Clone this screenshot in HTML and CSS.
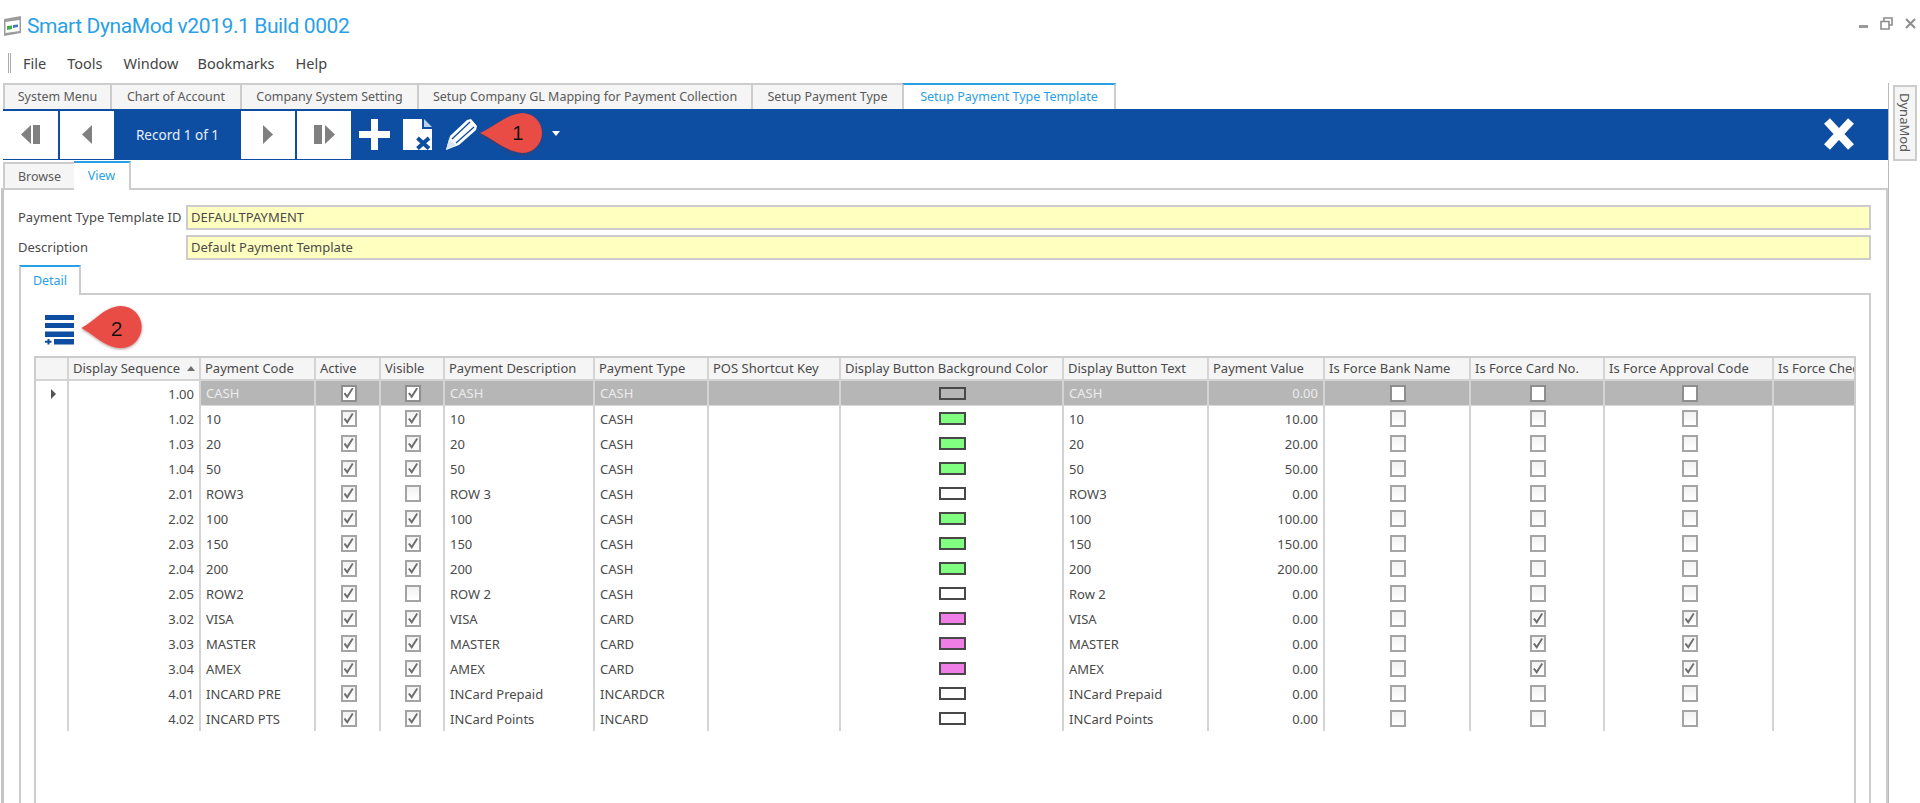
FILE: index.html
```html
<!DOCTYPE html>
<html lang="en">
<head>
<meta charset="utf-8">
<title>Smart DynaMod</title>
<link rel="stylesheet" href="styles.css">
</head>
<body>
<div class="app">
  <header class="titlebar">
    <svg class="logo" viewBox="0 0 19 20"><path d="M1 3 18 0V17L1 20Z" fill="#9c9c9c"/><path d="M2.500 6 16.500 4V15L2.500 17Z" fill="#fff"/><path d="M4 10 9 9.500V13L4 14Z" fill="#3fae49"/><path d="M10 9 15 8.500V11L10 12Z" fill="#4a78b8"/></svg>
    <h1 class="app-title">Smart DynaMod v2019.1 Build 0002</h1>
    <div class="winctl">
      <svg class="wc-min" viewBox="0 0 9 3"><rect width="9" height="3" fill="#9a9a9a"/></svg>
      <svg class="wc-res" viewBox="0 0 13 13"><path d="M4 4V1H12V8H9M1 4.500H9V12H1Z" fill="none" stroke="#8c8c8c" stroke-width="1.600"/></svg>
      <svg class="wc-close" viewBox="0 0 11 11"><path d="M1 1 10 10M10 1 1 10" stroke="#8c8c8c" stroke-width="2"/></svg>
    </div>
  </header>
  <nav class="menubar">
    <span class="grip"></span>
    <span class="mi mi-file">File</span><span class="mi mi-tools">Tools</span><span class="mi mi-window">Window</span><span class="mi mi-book">Bookmarks</span><span class="mi">Help</span>
  </nav>
  <div class="stage">
    <main class="workspace">
      <div class="doc-tabs">
        <span class="dtab t1">System Menu</span><span class="dtab t2">Chart of Account</span><span class="dtab t3">Company System Setting</span><span class="dtab t4">Setup Company GL Mapping for Payment Collection</span><span class="dtab t5">Setup Payment Type</span><span class="dtab t6 active">Setup Payment Type Template</span>
      </div>
      <div class="toolbar">
        <button class="navbtn b1"><svg viewBox="0 0 19 19" class="navico"><path d="M10 0V19L0 9.500Z M12 0H19V19H12Z" fill="#808080"/></svg></button>
        <button class="navbtn b2"><svg viewBox="0 0 10 19" class="navico-s"><path d="M10 0V19L0 9.500Z" fill="#808080"/></svg></button>
        <span class="record">Record 1 of 1</span>
        <button class="navbtn b3"><svg viewBox="0 0 10 19" class="navico-s"><path d="M0 0V19L10 9.500Z" fill="#808080"/></svg></button>
        <button class="navbtn b4"><svg viewBox="0 0 21 19" class="navico-r"><path d="M0 0H8V19H0Z M11 0V19L21 9.500Z" fill="#808080"/></svg></button>
        <svg class="ti ti-plus" viewBox="0 0 31 31"><path d="M12 0H19V12H31V19H19V31H12V19H0V12H12Z" fill="#fff"/></svg>
        <svg class="ti ti-doc" viewBox="0 0 29 31"><path d="M0 0H19V10H29V31H0Z" fill="#fff"/><path d="M21 0 29 8H21Z" fill="#bcd0ea"/><path d="M14.500 19 26 29.500M26 19 14.500 29.500" stroke="#0e4ea2" stroke-width="4"/></svg>
        <svg class="ti ti-pen" viewBox="0 0 32 31"><path d="M0 31 4 17 21 1 25 0 31 7 30 11 13 26Z" fill="#fff"/><path d="M6 20 24 3M10 24 28 8" stroke="#0e4ea2" stroke-width="1.300"/><path d="M0 31 3 20 10 26Z" fill="#dbe6f4"/></svg>
        <span class="caret"></span>
        <svg class="ti ti-close" viewBox="0 0 30 32"><path d="M3 3 27 29M27 3 3 29" stroke="#fff" stroke-width="8"/></svg>
        <svg class="callout co1" viewBox="-1 -1 65 44"><path d="M0 20C15 13 25 2 42 0A20 20 0 1 1 42 40C25 38 15 27 0 20Z" fill="#e94b45"/><text x="38" y="27" class="co-num co-num1">1</text></svg>
      </div>
      <section class="pane">
        <div class="view-tabs"><span class="vtab">Browse</span><span class="vtab active">View</span></div>
        <div class="view-body">
          <div class="field"><label class="flabel">Payment Type Template ID</label><div class="finput">DEFAULTPAYMENT</div></div>
          <div class="field"><label class="flabel">Description</label><div class="finput">Default Payment Template</div></div>
          <div class="detail-tabs"><span class="detail-tab">Detail</span></div>
          <div class="detail-panel">
            <div class="grid-tools">
              <svg class="rows-ico" viewBox="0 0 29 30"><path d="M0 0H29V5H0ZM0 8H29V13H0ZM0 16.500H29V22H0ZM9 24H29V29.500H9ZM2.500 24H4.500V25.700H6.500V27.700H4.500V29.500H2.500V27.700H0V25.700H2.500Z" fill="#0e4ea2"/></svg>
              <svg class="rows-ico2" viewBox="0 0 29 29"><path d="M0 0H29V6H0ZM0 22H29V29H0Z" fill="#0e4ea2"/></svg>
              <svg class="callout co2" viewBox="-1 -1 66 46"><path d="M0 23C15 15 24 1 41 0A22 22 0 1 1 41 44C24 43 15 31 0 23Z" fill="#e94b45"/><text x="37" y="31" class="co-num co-num2">2</text></svg>
            </div>
            <div class="grid-wrap">
              <table class="grid">
                <colgroup><col class="c0"><col class="c1"><col class="c2"><col class="c3"><col class="c4"><col class="c5"><col class="c6"><col class="c7"><col class="c8"><col class="c9"><col class="c10"><col class="c11"><col class="c12"><col class="c13"><col class="c14"></colgroup>
                <thead><tr><th></th><th>Display Sequence <span class="sort"></span></th><th>Payment Code</th><th>Active</th><th>Visible</th><th>Payment Description</th><th>Payment Type</th><th>POS Shortcut Key</th><th>Display Button Background Color</th><th>Display Button Text</th><th>Payment Value</th><th>Is Force Bank Name</th><th>Is Force Card No.</th><th>Is Force Approval Code</th><th>Is Force Cheque No.</th></tr></thead>
                <tbody>
                  <tr class="sel"><td class="ind"><span class="arrow"></span></td><td class="num seq">1.00</td><td>CASH</td><td class="ctr"><span class="cb on"></span></td><td class="ctr"><span class="cb on"></span></td><td>CASH</td><td>CASH</td><td></td><td class="ctr"><span class="sw grey"></span></td><td>CASH</td><td class="num">0.00</td><td class="ctr"><span class="cb"></span></td><td class="ctr"><span class="cb"></span></td><td class="ctr"><span class="cb"></span></td><td></td></tr>
                  <tr><td class="ind"></td><td class="num seq">1.02</td><td>10</td><td class="ctr"><span class="cb on"></span></td><td class="ctr"><span class="cb on"></span></td><td>10</td><td>CASH</td><td></td><td class="ctr"><span class="sw green"></span></td><td>10</td><td class="num">10.00</td><td class="ctr"><span class="cb"></span></td><td class="ctr"><span class="cb"></span></td><td class="ctr"><span class="cb"></span></td><td></td></tr>
                  <tr><td class="ind"></td><td class="num seq">1.03</td><td>20</td><td class="ctr"><span class="cb on"></span></td><td class="ctr"><span class="cb on"></span></td><td>20</td><td>CASH</td><td></td><td class="ctr"><span class="sw green"></span></td><td>20</td><td class="num">20.00</td><td class="ctr"><span class="cb"></span></td><td class="ctr"><span class="cb"></span></td><td class="ctr"><span class="cb"></span></td><td></td></tr>
                  <tr><td class="ind"></td><td class="num seq">1.04</td><td>50</td><td class="ctr"><span class="cb on"></span></td><td class="ctr"><span class="cb on"></span></td><td>50</td><td>CASH</td><td></td><td class="ctr"><span class="sw green"></span></td><td>50</td><td class="num">50.00</td><td class="ctr"><span class="cb"></span></td><td class="ctr"><span class="cb"></span></td><td class="ctr"><span class="cb"></span></td><td></td></tr>
                  <tr><td class="ind"></td><td class="num seq">2.01</td><td>ROW3</td><td class="ctr"><span class="cb on"></span></td><td class="ctr"><span class="cb"></span></td><td>ROW 3</td><td>CASH</td><td></td><td class="ctr"><span class="sw white"></span></td><td>ROW3</td><td class="num">0.00</td><td class="ctr"><span class="cb"></span></td><td class="ctr"><span class="cb"></span></td><td class="ctr"><span class="cb"></span></td><td></td></tr>
                  <tr><td class="ind"></td><td class="num seq">2.02</td><td>100</td><td class="ctr"><span class="cb on"></span></td><td class="ctr"><span class="cb on"></span></td><td>100</td><td>CASH</td><td></td><td class="ctr"><span class="sw green"></span></td><td>100</td><td class="num">100.00</td><td class="ctr"><span class="cb"></span></td><td class="ctr"><span class="cb"></span></td><td class="ctr"><span class="cb"></span></td><td></td></tr>
                  <tr><td class="ind"></td><td class="num seq">2.03</td><td>150</td><td class="ctr"><span class="cb on"></span></td><td class="ctr"><span class="cb on"></span></td><td>150</td><td>CASH</td><td></td><td class="ctr"><span class="sw green"></span></td><td>150</td><td class="num">150.00</td><td class="ctr"><span class="cb"></span></td><td class="ctr"><span class="cb"></span></td><td class="ctr"><span class="cb"></span></td><td></td></tr>
                  <tr><td class="ind"></td><td class="num seq">2.04</td><td>200</td><td class="ctr"><span class="cb on"></span></td><td class="ctr"><span class="cb on"></span></td><td>200</td><td>CASH</td><td></td><td class="ctr"><span class="sw green"></span></td><td>200</td><td class="num">200.00</td><td class="ctr"><span class="cb"></span></td><td class="ctr"><span class="cb"></span></td><td class="ctr"><span class="cb"></span></td><td></td></tr>
                  <tr><td class="ind"></td><td class="num seq">2.05</td><td>ROW2</td><td class="ctr"><span class="cb on"></span></td><td class="ctr"><span class="cb"></span></td><td>ROW 2</td><td>CASH</td><td></td><td class="ctr"><span class="sw white"></span></td><td>Row 2</td><td class="num">0.00</td><td class="ctr"><span class="cb"></span></td><td class="ctr"><span class="cb"></span></td><td class="ctr"><span class="cb"></span></td><td></td></tr>
                  <tr><td class="ind"></td><td class="num seq">3.02</td><td>VISA</td><td class="ctr"><span class="cb on"></span></td><td class="ctr"><span class="cb on"></span></td><td>VISA</td><td>CARD</td><td></td><td class="ctr"><span class="sw pink"></span></td><td>VISA</td><td class="num">0.00</td><td class="ctr"><span class="cb"></span></td><td class="ctr"><span class="cb on"></span></td><td class="ctr"><span class="cb on"></span></td><td></td></tr>
                  <tr><td class="ind"></td><td class="num seq">3.03</td><td>MASTER</td><td class="ctr"><span class="cb on"></span></td><td class="ctr"><span class="cb on"></span></td><td>MASTER</td><td>CARD</td><td></td><td class="ctr"><span class="sw pink"></span></td><td>MASTER</td><td class="num">0.00</td><td class="ctr"><span class="cb"></span></td><td class="ctr"><span class="cb on"></span></td><td class="ctr"><span class="cb on"></span></td><td></td></tr>
                  <tr><td class="ind"></td><td class="num seq">3.04</td><td>AMEX</td><td class="ctr"><span class="cb on"></span></td><td class="ctr"><span class="cb on"></span></td><td>AMEX</td><td>CARD</td><td></td><td class="ctr"><span class="sw pink"></span></td><td>AMEX</td><td class="num">0.00</td><td class="ctr"><span class="cb"></span></td><td class="ctr"><span class="cb on"></span></td><td class="ctr"><span class="cb on"></span></td><td></td></tr>
                  <tr><td class="ind"></td><td class="num seq">4.01</td><td>INCARD PRE</td><td class="ctr"><span class="cb on"></span></td><td class="ctr"><span class="cb on"></span></td><td>INCard Prepaid</td><td>INCARDCR</td><td></td><td class="ctr"><span class="sw white"></span></td><td>INCard Prepaid</td><td class="num">0.00</td><td class="ctr"><span class="cb"></span></td><td class="ctr"><span class="cb"></span></td><td class="ctr"><span class="cb"></span></td><td></td></tr>
                  <tr><td class="ind"></td><td class="num seq">4.02</td><td>INCARD PTS</td><td class="ctr"><span class="cb on"></span></td><td class="ctr"><span class="cb on"></span></td><td>INCard Points</td><td>INCARD</td><td></td><td class="ctr"><span class="sw white"></span></td><td>INCard Points</td><td class="num">0.00</td><td class="ctr"><span class="cb"></span></td><td class="ctr"><span class="cb"></span></td><td class="ctr"><span class="cb"></span></td><td></td></tr>
                </tbody>
              </table>
            </div>
          </div>
        </div>
      </section>
    </main>
    <aside class="rail"><span class="rail-tab">DynaMod</span></aside>
  </div>
</div>
</body>
</html>
```
FILE: styles.css
```css
* { box-sizing: border-box; }
html, body { margin: 0; height: 803px; overflow: hidden; background: #fff; }
body { font-family: "Noto Sans", sans-serif; font-size: 13px; color: #4a4a4a; }
.app { display: flex; flex-direction: column; height: 803px; }

.titlebar { height: 42px; display: flex; align-items: center; padding: 10px 4px 0 3px; }
.logo { width: 19px; height: 20px; margin-right: 5px; }
.app-title { margin: 0; font-family: Roboto, sans-serif; font-size: 21px; letter-spacing: -.4px; font-weight: 400; color: #2a9fe6; }
.winctl { margin-left: auto; display: flex; align-items: center; margin-top: -6px; }
.wc-min { width: 9px; height: 3px; margin: 6px 12px 0 0; }
.wc-res { width: 13px; height: 13px; margin-right: 12px; }
.wc-close { width: 11px; height: 11px; }

.menubar { height: 41px; display: flex; align-items: center; padding: 0 0 0 8px; color: #444; font-size: 14.500px; }
.grip { width: 3px; height: 20px; border-left: 1px solid #aaa; border-right: 1px solid #aaa; margin-right: 12px; }
.mi-file { margin-right: 21px; }
.mi-tools { margin-right: 21px; }
.mi-window { margin-right: 19px; }
.mi-book { margin-right: 21px; }

.stage { flex: 1; display: flex; min-height: 0; }
.workspace { width: 1889px; padding-left: 1px; display: flex; flex-direction: column; border-right: 1px solid #bbb; }
.doc-tabs { height: 26px; margin-left: 2px; display: flex; }
.dtab { height: 26px; padding-bottom: 2px; display: flex; align-items: center; justify-content: center; background: #f5f5f5; border: 2px solid #ccc; border-bottom: 0; border-right-width: 0; color: #5a5a5a; white-space: nowrap; font-size: 12.500px; }
.t1 { width: 107px; } .t2 { width: 130px; } .t3 { width: 177px; } .t4 { width: 334px; } .t5 { width: 151px; }
.t6 { width: 214px; border-right-width: 2px; }
.dtab.active { background: #fff; color: #2a9fe6; border-top: 2px solid #2a9fe6; }

.toolbar { position: relative; height: 51px; margin-left: 2px; background: #0e4ea2; display: flex; align-items: center; padding: 0; }
.navbtn { height: 48px; padding: 0; margin: 0; border: 0; background: #fff; display: flex; align-items: center; justify-content: center; }
.b1 { width: 55px; margin-right: 2px; }
.b2 { width: 54px; }
.b3 { width: 54px; margin-right: 2px; }
.b4 { width: 54px; }
.navico { width: 19px; height: 19px; }
.navico-s { width: 10px; height: 19px; }
.navico-r { width: 21px; height: 19px; }
.record { width: 127px; text-align: center; color: #e8eef7; font-size: 13.500px; }
.ti { display: block; flex: none; }
.ti-plus { width: 31px; height: 31px; margin-left: 8px; }
.ti-doc { width: 29px; height: 31px; margin-left: 13px; }
.ti-pen { width: 32px; height: 31px; margin-left: 14px; }
.caret { width: 0; height: 0; border-left: 4.500px solid transparent; border-right: 4.500px solid transparent; border-top: 5px solid #fff; margin-left: 74px; margin-top: -3px; }
.ti-close { width: 30px; height: 32px; margin-left: auto; margin-right: 34px; margin-top: -2px; }
.callout { position: absolute; filter: drop-shadow(0 1px 1.500px rgba(120, 40, 40, .55)); overflow: visible; }
.co1 { left: 476px; top: 3px; width: 65px; height: 44px; }
.co2 { left: 46px; top: 10px; width: 64px; height: 44px; }
.co-num { font-family: "Liberation Sans", sans-serif; fill: #111; text-anchor: middle; }
.co-num1 { font-size: 20px; }
.co-num2 { font-size: 22px; }

.pane { flex: 1; min-height: 0; display: flex; flex-direction: column; }
.view-tabs { height: 28px; display: flex; align-items: flex-end; margin-left: 2px; }
.vtab { width: 71px; height: 26px; background: #f5f5f5; border: 2px solid #ccc; border-bottom: 0; border-right: 0; display: flex; align-items: center; justify-content: center; color: #5a5a5a; font-size: 12.500px; }
.vtab.active { width: 57px; height: 29px; background: #fff; color: #2a9fe6; border: 0; border-top: 2px solid #2a9fe6; border-right: 2px solid #ccc; padding-bottom: 3px; position: relative; z-index: 1; margin-bottom: -2px; }
.view-body { flex: 1; min-height: 0; border-top: 2px solid #ccc; border-left: 3px solid #c4c4c4; border-right: 2px solid #ccc; padding: 15px 15px 0 14px; }
.field { display: flex; align-items: center; height: 25px; margin-bottom: 5px; }
.flabel { width: 168px; padding-bottom: 2px; color: #4a4a4a; white-space: nowrap; }
.finput { flex: 1; height: 25px; background: #ffffc0; border: 2px solid #ccc; display: flex; align-items: center; padding: 0 0 2px 3px; color: #4a4a4a; }
.detail-tabs { height: 30px; margin-left: 1px; display: flex; }
.detail-tab { width: 62px; height: 30px; padding-bottom: 2px; border-top: 2px solid #2a9fe6; border-left: 2px solid #ccc; border-right: 2px solid #ccc; color: #2a9fe6; background: #fff; display: flex; align-items: center; justify-content: center; position: relative; z-index: 1; font-size: 12.500px; }
.detail-panel { margin-left: 1px; height: 520px; border: 2px solid #ccc; border-bottom: 0; margin-top: -2px; padding: 0 13px; }
.grid-tools { position: relative; height: 61px; }
.rows-ico { position: absolute; left: 11px; top: 20px; width: 29px; height: 30px; }
.rows-ico2 { position: absolute; left: 62px; top: 20px; width: 16px; height: 29px; }
.grid-wrap { height: 460px; border: 2px solid #ccc; border-bottom: 0; overflow: hidden; }
.grid { table-layout: fixed; width: 1819px; border-collapse: separate; border-spacing: 0; }
.c0 { width: 33px; } .c1 { width: 132px; } .c2 { width: 115px; } .c3 { width: 65px; } .c4 { width: 64px; }
.c5 { width: 150px; } .c6 { width: 114px; } .c7 { width: 132px; } .c8 { width: 223px; } .c9 { width: 145px; }
.c10 { width: 116px; } .c11 { width: 146px; } .c12 { width: 134px; } .c13 { width: 169px; } .c14 { width: 81px; }
.grid th { height: 23px; background: #f5f5f5; border-right: 2px solid #d4d4d4; border-bottom: 2px solid #d4d4d4; text-align: left; font-weight: 400; color: #4a4a4a; padding: 0 0 2px 4px; white-space: nowrap; overflow: hidden; }
.grid th:last-child, .grid td:last-child { border-right: 0; }
.grid td { height: 25px; padding: 0 5px; border-right: 2px solid #d4d4d4; white-space: nowrap; overflow: hidden; color: #4a4a4a; }
.grid td.num { text-align: right; padding-right: 5px; }
.grid td.ctr { text-align: center; padding: 0 0 0 2px; line-height: 0; }
.sort { display: inline-block; width: 0; height: 0; border-left: 4.500px solid transparent; border-right: 4.500px solid transparent; border-bottom: 5px solid #6e6e6e; margin: 0 0 2px 3px; }
.arrow { display: block; width: 0; height: 0; border-top: 5px solid transparent; border-bottom: 5px solid transparent; border-left: 5px solid #555; margin-left: 10px; }
.grid tr.sel td { background: #b6b6b6; color: #ececec; border-bottom: 1px solid #d8d8d8; }
.grid tr.sel td.ind, .grid tr.sel td.seq { background: #fff; color: #4a4a4a; border-bottom: 0; }
.cb { display: inline-block; width: 16px; height: 17px; border: 2px solid #a4a4a4; background: linear-gradient(#f2f2f2, #fff); position: relative; vertical-align: middle; }
.sel .cb { background: #fff; border-color: #8e8e8e; }
.cb.on::after { content: ""; position: absolute; left: 1px; top: 1px; width: 10px; height: 11px; background: #6e6e6e; clip-path: polygon(0 55%, 18% 45%, 36% 68%, 85% 0, 100% 8%, 38% 100%); }
.sw { display: inline-block; width: 27px; height: 13px; border: 2px solid #484848; vertical-align: middle; }
.sw.green { background: #80ff80; }
.sw.pink { background: #ef7fe6; }
.sw.white { background: #fff; }
.sw.grey { background: #b6b6b6; }

.rail { flex: 1; padding: 2px 2px 0 4px; }
.rail-tab { display: block; height: 76px; width: 24px; padding-top: 6px; background: #f5f5f5; border: 2px solid #ccc; writing-mode: vertical-rl; color: #5a5a5a; line-height: 20px; }
```
